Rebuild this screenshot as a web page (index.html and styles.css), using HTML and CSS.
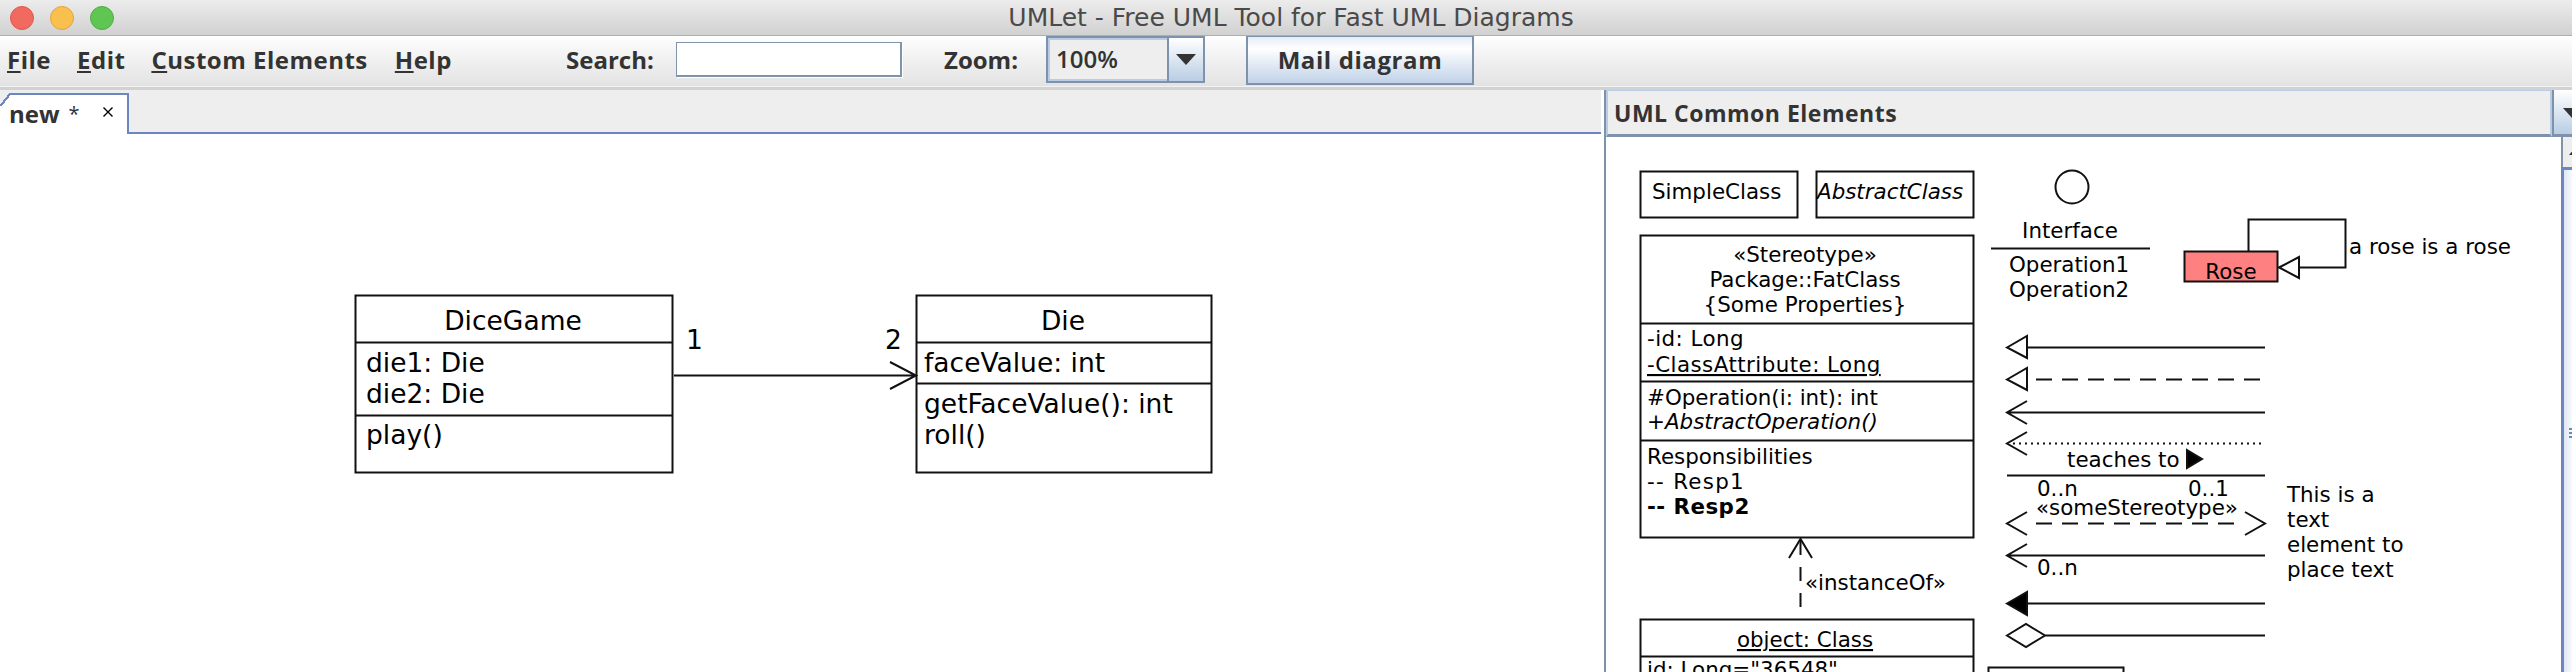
FILE: index.html
```html
<!DOCTYPE html>
<html lang="en">
<head>
    <meta charset="UTF-8">
    <title>UMLet - Free UML Tool for Fast UML Diagrams</title>
    <link rel="stylesheet" href="styles.css">
</head>
<body>
    <div class="titlebar">
        <div class="lights">
            <span class="light red"></span>
            <span class="light yellow"></span>
            <span class="light green"></span>
        </div>
        <div class="title">UMLet - Free UML Tool for Fast UML Diagrams</div>
    </div>

    <div class="toolbar">
        <div class="menu">
            <span class="menu-item file"><u>F</u>ile</span>
            <span class="menu-item edit"><u>E</u>dit</span>
            <span class="menu-item custom"><u>C</u>ustom Elements</span>
            <span class="menu-item help"><u>H</u>elp</span>
        </div>
        <label class="tool-label search-label">Search:</label>
        <div class="search-box"></div>
        <label class="tool-label zoom-label">Zoom:</label>
        <div class="combo">
            <div class="combo-value">100%</div>
            <div class="combo-button"><span class="arrow-down"></span></div>
        </div>
        <div class="mail-button">Mail diagram</div>
    </div>
    <div class="rule"></div>

    <div class="main">
        <div class="editor">
            <div class="tabstrip">
                <div class="tab">
                    <span class="tab-name">new</span>
                    <span class="tab-star">*</span>
                    <svg class="tab-close" width="10" height="10" viewBox="0 0 10 10">
                        <path d="M0.5 0.5 L9.5 9.5 M9.5 0.5 L0.5 9.5" stroke="#000" stroke-width="1.4" fill="none"/>
                    </svg>
                </div>
            </div>
            <svg class="canvas" viewBox="0 134 1601 538" width="1601" height="538">
                <g class="shape">
                    <rect x="355.5" y="295.5" width="317" height="177"/>
                    <path d="M355 342.5 H673 M355 415.5 H673"/>
                    <rect x="916.5" y="295.5" width="295" height="177"/>
                    <path d="M916 342.5 H1212 M916 383.5 H1212"/>
                    <path d="M674 375.5 H916 M890 362 L916 375.5 L890 389"/>
                </g>
                <g class="big">
                    <text x="513" y="330" text-anchor="middle">DiceGame</text>
                    <text x="366" y="372">die1: Die</text>
                    <text x="366" y="403">die2: Die</text>
                    <text x="366" y="444">play()</text>
                    <text x="1063" y="330" text-anchor="middle">Die</text>
                    <text x="924" y="372">faceValue: int</text>
                    <text x="924" y="413">getFaceValue(): int</text>
                    <text x="924" y="444">roll()</text>
                    <text x="686" y="349">1</text>
                    <text x="885" y="349">2</text>
                </g>
            </svg>
        </div>

        <div class="palette">
            <div class="palette-head">
                <div class="palette-name">UML Common Elements</div>
                <div class="palette-button"><span class="arrow-down"></span></div>
            </div>
            <div class="palette-body">
                <svg class="palette-art" viewBox="1605 137 955 535" width="955" height="535">
                    <g class="shape">
                        <rect x="1639.5" y="171.5" width="157" height="46"/>
                        <rect x="1815.5" y="171.5" width="157" height="46"/>
                        <ellipse cx="2071" cy="187" rx="16.5" ry="16.5"/>
                        <path d="M1990 248.5 H2149"/>
                        <rect x="1639.5" y="235.5" width="333" height="302"/>
                        <path d="M1639 323.5 H1973 M1639 381.5 H1973 M1639 440.5 H1973"/>
                        <rect class="rose" x="2183.5" y="251.5" width="93" height="30"/>
                        <path d="M2247.5 251 V219.5 H2344.5 V267.5 H2298"/>
                        <path d="M2278 267.5 L2298 257 V278 Z"/>

                        <path d="M1788 558 L1799.5 539 L1811 558"/>
                        <path class="dash-v" d="M1799.5 541 V612"/>

                        <path d="M2006 347.5 L2026 336 V358 Z M2026 347.5 H2264"/>
                        <path d="M2006 379.5 L2026 368 V390 Z"/>
                        <path class="dash" d="M2035 379.5 H2260"/>
                        <path d="M2026 401 L2006 412.5 L2026 424 M2006 412.5 H2264"/>
                        <path d="M2026 432 L2006 443.5 L2026 455"/>
                        <path class="dots" d="M2012 443.5 H2264"/>
                        <path d="M2006 475.5 H2264"/>
                        <path d="M2026 512 L2006 523.5 L2026 535 M2244 512 L2264 523.5 L2244 535"/>
                        <path class="dash" d="M2035 523.5 H2238"/>
                        <path d="M2026 544 L2006 555.5 L2026 567 M2006 555.5 H2264"/>
                        <path class="solid" d="M2006 603.5 L2026 592 V615 Z"/>
                        <path d="M2026 603.5 H2264"/>
                        <path d="M2006 635.5 L2025 624 L2044 635.5 L2025 647 Z M2044 635.5 H2264"/>

                        <rect x="1639.5" y="619.5" width="333" height="70"/>
                        <path d="M1639 656.5 H1973"/>
                        <rect x="1987.5" y="667.5" width="135" height="40"/>
                        <path class="solid" d="M2186 450 L2201 459 L2186 468 Z"/>
                    </g>
                    <g class="small">
                        <text x="1651" y="199">SimpleClass</text>
                        <text x="1816" y="199" class="em">AbstractClass</text>
                        <text x="1804" y="262" text-anchor="middle">«Stereotype»</text>
                        <text x="1804" y="287" text-anchor="middle">Package::FatClass</text>
                        <text x="1804" y="312" text-anchor="middle">{Some Properties}</text>
                        <text x="1646" y="346" class="loose">-id: Long</text>
                        <text x="1646" y="372" class="loose under">-ClassAttribute: Long</text>
                        <text x="1646" y="405">#Operation(i: int): int</text>
                        <text x="1646" y="429" class="em">+AbstractOperation()</text>
                        <text x="1646" y="464">Responsibilities</text>
                        <text x="1646" y="489" class="spaced">-- Resp1</text>
                        <text x="1646" y="514" class="strong loose">-- Resp2</text>
                        <text x="1804" y="590">«instanceOf»</text>
                        <text x="1804" y="647" text-anchor="middle" class="under">object: Class</text>
                        <text x="1646" y="677">id: Long="36548"</text>

                        <text x="2069" y="238" text-anchor="middle">Interface</text>
                        <text x="2008" y="272">Operation1</text>
                        <text x="2008" y="297">Operation2</text>
                        <text x="2230" y="279" text-anchor="middle">Rose</text>
                        <text x="2348" y="254">a rose is a rose</text>

                        <text x="2066" y="467">teaches to</text>
                        <text x="2036" y="496">0..n</text>
                        <text x="2187" y="496">0..1</text>
                        <text x="2035" y="515">«someStereotype»</text>
                        <text x="2036" y="575">0..n</text>
                        <text x="2286" y="502">This is a</text>
                        <text x="2286" y="527">text</text>
                        <text x="2286" y="552">element to</text>
                        <text x="2286" y="577">place text</text>
                    </g>
                </svg>
                <div class="scrollbar">
                    <div class="scroll-up"><span class="arrow-up"></span></div>
                    <div class="scroll-thumb">
                        <div class="grip"></div>
                    </div>
                </div>
            </div>
        </div>
    </div>
</body>
</html>
```

FILE: styles.css
```css
* {
    margin: 0;
    padding: 0;
    box-sizing: border-box;
}

body {
    width: 2572px;
    height: 672px;
    overflow: hidden;
    background: #fff;
    color: #333;
    font-family: 'Open Sans', 'DejaVu Sans', sans-serif;
}

/* window title */
.titlebar {
    height: 36px;
    display: flex;
    align-items: center;
    background: linear-gradient(#ececec, #d1d1d1);
    border-bottom: 1px solid #aeaeae;
}

.lights {
    width: 0;
    display: flex;
    gap: 16px;
    padding-left: 10px;
}

.light {
    flex: none;
    width: 24px;
    height: 24px;
    border-radius: 50%;
}

.red { background: #f2695f; border: 1px solid #dc5a50; }
.yellow { background: #f9c04f; border: 1px solid #e0a63c; }
.green { background: #60c653; border: 1px solid #4fae43; }

.title {
    flex: 1;
    text-align: center;
    font-family: 'DejaVu Sans', sans-serif;
    font-size: 25px;
    color: #4a4a4a;
}

/* toolbar */
.toolbar {
    height: 50px;
    display: flex;
    align-items: flex-start;
    background: linear-gradient(#fff, #f5f5f5 30%, #e3e3e3);
    font-family: 'Open Sans', sans-serif;
    font-size: 24px;
    font-weight: 700;
    line-height: 30px;
    color: #333;
}

.menu {
    width: 566px;
    display: flex;
    padding-top: 9px;
    letter-spacing: 0.5px;
}

.menu-item { display: block; }
.file { margin-left: 7px; }
.edit { margin-left: 26px; }
.custom { margin-left: 26px; }
.help { margin-left: 27px; }

.tool-label { padding-top: 9px; }
.search-label { width: 110px; }
.zoom-label { width: 102px; }

.search-box {
    width: 226px;
    height: 35px;
    margin-top: 6px;
    margin-right: 42px;
    background: #fff;
    border: 1px solid #8093a8;
    border-bottom-width: 2px;
    border-right-width: 2px;
    box-shadow: 1px 1px 0 #fff;
}

.combo {
    width: 159px;
    height: 47px;
    display: flex;
    border: 2px solid #7e93ab;
}

.combo-value {
    width: 119px;
    padding: 4px 0 0 6px;
    background: #eee;
    border: 2px solid #b8cde4;
    border-right: none;
    font-weight: 600;
    color: #333;
}

.combo-button {
    flex: 1;
    display: flex;
    align-items: center;
    justify-content: center;
    background: linear-gradient(#fff, #b9cde4);
    border-left: 2px solid #7e93ab;
}

.arrow-down {
    width: 0;
    height: 0;
    border-left: 10px solid transparent;
    border-right: 10px solid transparent;
    border-top: 11px solid #333;
}

.mail-button {
    width: 228px;
    height: 49px;
    margin-left: 41px;
    padding-top: 8px;
    text-align: center;
    letter-spacing: 0.6px;
    background: linear-gradient(#e4edf7, #fff 25%, #c0d2e8);
    border: 2px solid #7e93ab;
    border-top-width: 1px;
}

.rule {
    height: 4px;
    background: #d2d2d2;
    border-top: 1px solid #f2f2f2;
}

/* main area */
.main {
    height: 582px;
    display: flex;
    background: #fff;
}

.editor {
    width: 1601px;
    flex: none;
}

.tabstrip {
    height: 44px;
    padding-top: 3px;
    background: #eee;
    border-bottom: 2px solid #6c87c0;
}

.tab {
    position: relative;
    width: 129px;
    height: 41px;
    display: flex;
    align-items: flex-start;
    padding: 3px 0 0 9px;
    background: #fff;
    border-top: 2px solid #6c87c0;
    border-right: 2px solid #6c87c0;
    font-family: 'Open Sans', sans-serif;
    font-size: 24px;
    line-height: 32px;
    font-weight: 700;
    color: #333;
}

.tab::before {
    content: "";
    position: absolute;
    left: 0;
    top: -2px;
    width: 10px;
    height: 13px;
    background: linear-gradient(to bottom right, #eee 46%, #6c87c0 46%, #6c87c0 60%, #fff 60%);
}

.tab-star {
    margin-left: 9px;
    font-size: 20px;
    font-weight: 400;
}

.tab-close {
    position: absolute;
    left: 103px;
    top: 12px;
}

.canvas {
    display: block;
}

.palette {
    width: 968px;
    flex: none;
    margin-left: 3px;
    border-left: 2px solid #7e93ab;
}

.palette-head {
    height: 47px;
    display: flex;
}

.palette-name {
    flex: 1;
    padding: 6px 0 0 6px;
    background: #eee;
    border: 2px solid #b8cde4;
    border-top: 1px solid #b8cde4;
    border-bottom: 3px solid #7e93ab;
    font-family: 'Open Sans', sans-serif;
    font-size: 23px;
    line-height: 32px;
    font-weight: 700;
    letter-spacing: 0.5px;
    color: #333;
}

.palette-button {
    width: 20px;
    flex: none;
    padding: 18px 0 0 9px;
    overflow: hidden;
    background: linear-gradient(#fff, #b9cde4);
    border-left: 2px solid #7e93ab;
    border-bottom: 3px solid #7e93ab;
}

.palette-button .arrow-down {
    display: block;
}

.palette-body {
    display: flex;
    height: 535px;
}

.palette-art {
    display: block;
    flex: none;
}

.scrollbar {
    width: 11px;
    flex: none;
    display: flex;
    flex-direction: column;
}

.scroll-up {
    height: 30px;
    padding: 12px 0 0 6px;
    background: #eee;
    border-left: 2px solid #8093a8;
    overflow: hidden;
}

.arrow-up {
    display: block;
    width: 10px;
    height: 6px;
    border-left: 5px solid transparent;
    border-right: 5px solid transparent;
    border-bottom: 6px solid #333;
}

.scroll-thumb {
    flex: 1;
    padding: 258px 0 0 5px;
    background: linear-gradient(to right, #dfe7f3, #f7f9fc);
    border-left: 3px solid #6c87c0;
    border-top: 3px solid #6c87c0;
}

.grip {
    height: 10px;
    background: repeating-linear-gradient(#6c87c0 0, #6c87c0 2px, transparent 2px, transparent 4px);
}

/* diagram shapes and text */
.shape {
    fill: none;
    stroke: #111;
    stroke-width: 2;
}

.shape .rose { fill: #ff8080; }
.shape .solid { fill: #000; }
.shape .dash { stroke-dasharray: 16 10; }
.shape .dash-v { stroke-dasharray: 14 12; }
.shape .dots { stroke-dasharray: 2 4; }

.big text {
    font-family: 'DejaVu Sans', sans-serif;
    font-size: 26.5px;
    fill: #000;
}

.small text {
    font-family: 'DejaVu Sans', sans-serif;
    font-size: 21.4px;
    fill: #000;
}

.small .em { font-style: italic; }
.small .strong { font-weight: bold; }
.small .under { text-decoration: underline; }
.small .loose { letter-spacing: 0.45px; }
.small .spaced { letter-spacing: 1.3px; }
```
